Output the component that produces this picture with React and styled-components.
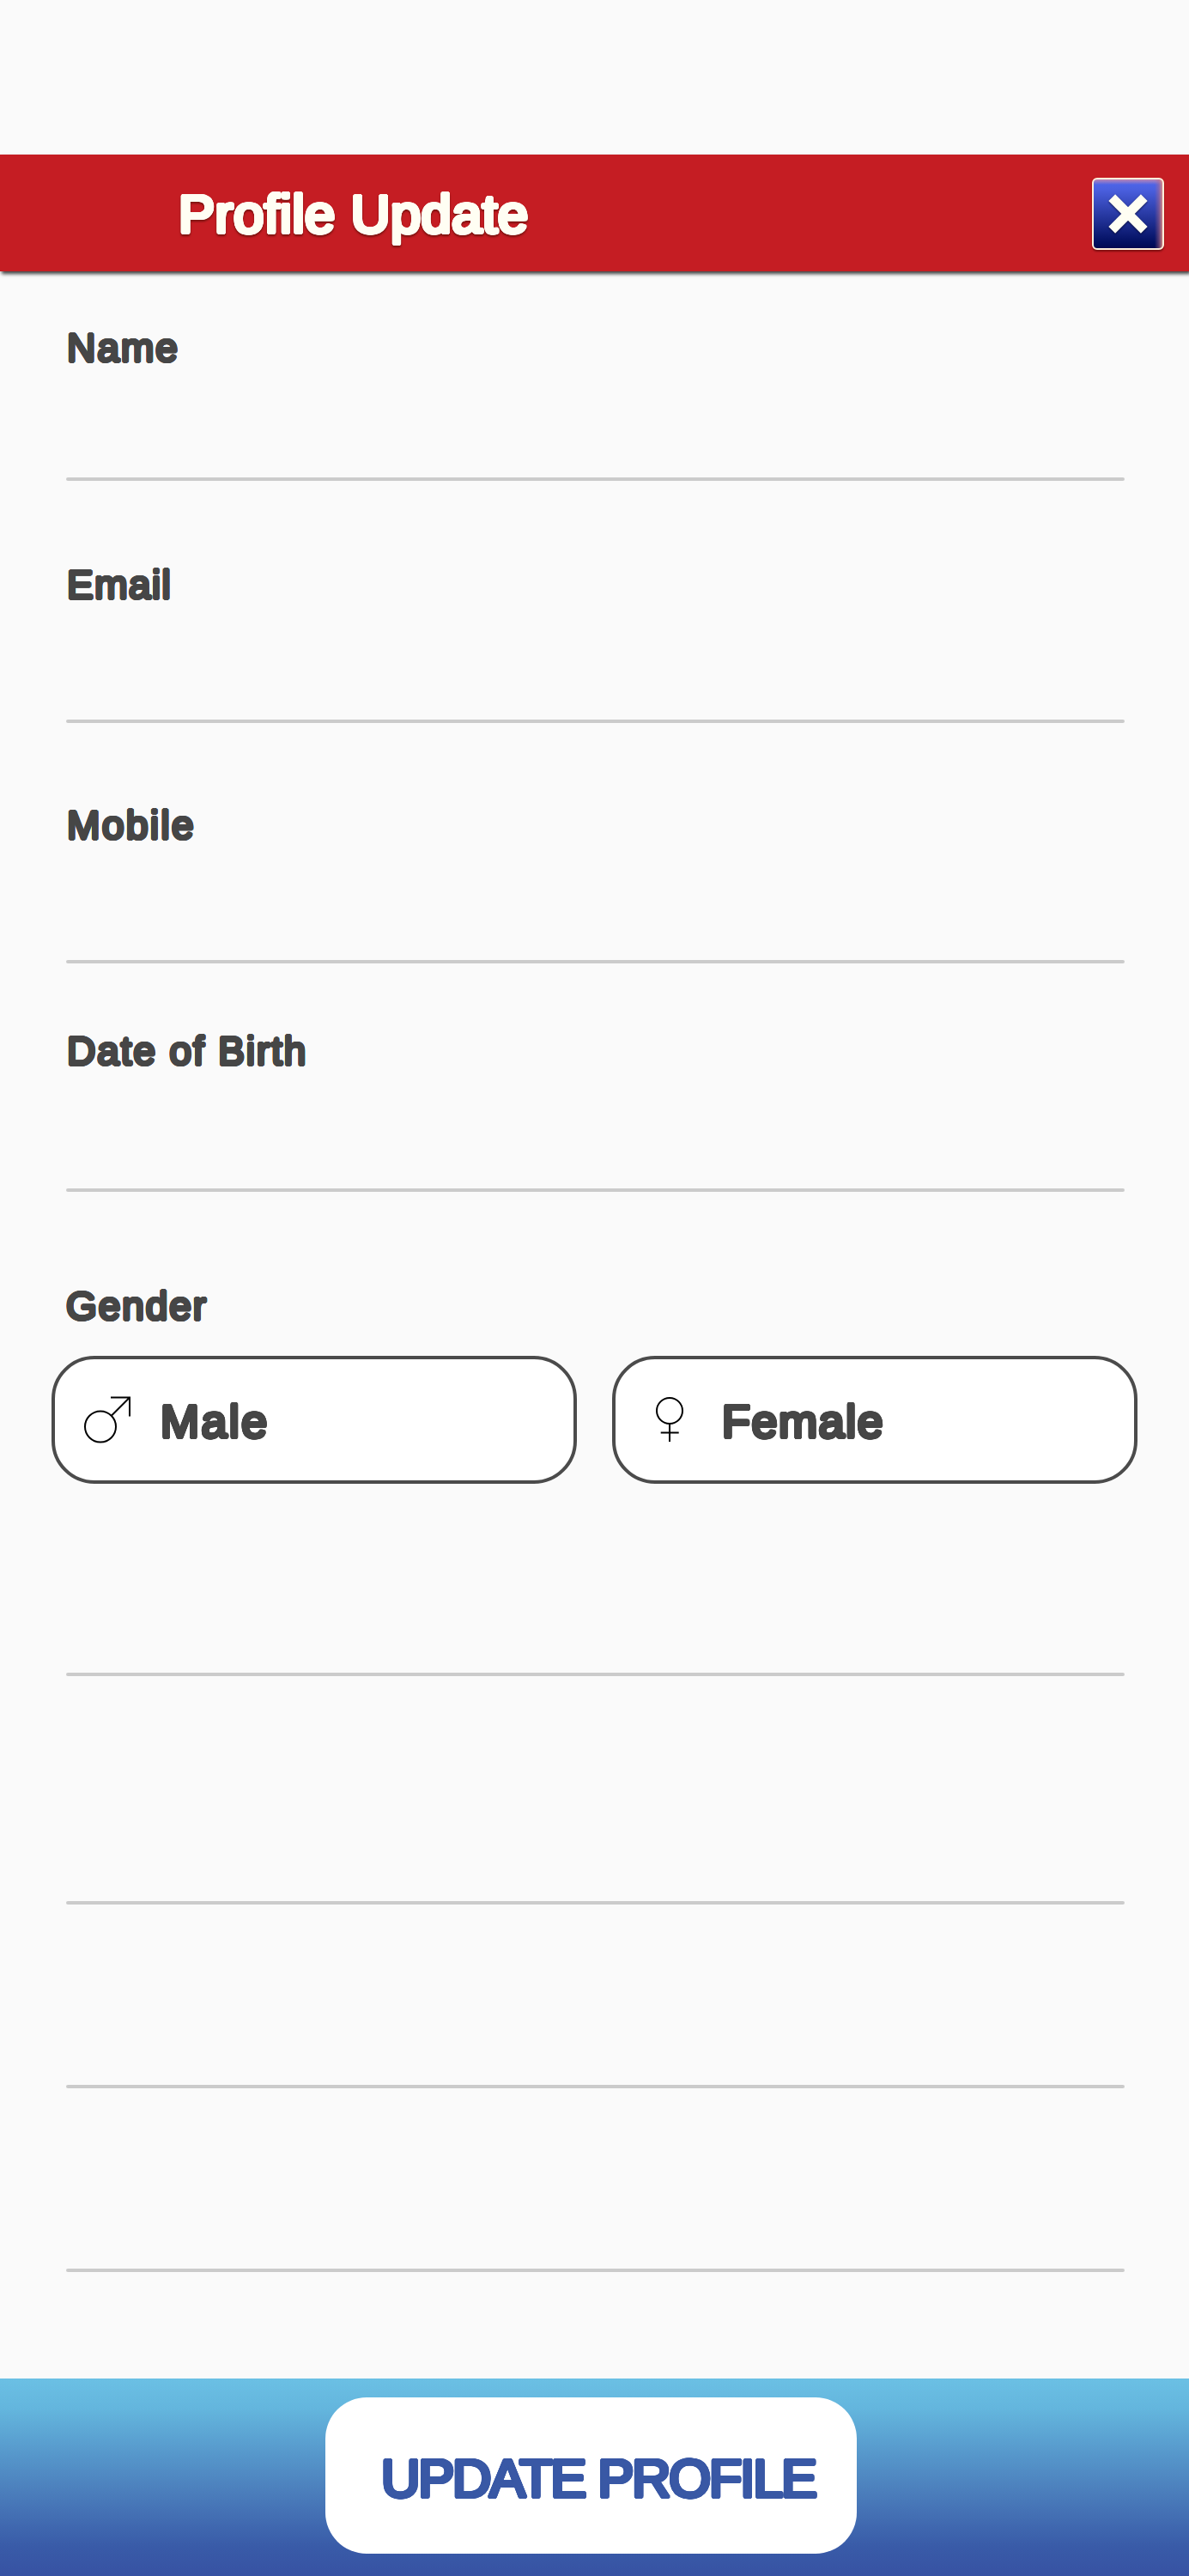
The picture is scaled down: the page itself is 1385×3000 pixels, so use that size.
import React from "react";
import styled, { createGlobalStyle, css } from "styled-components";

const GlobalStyle = createGlobalStyle`
  *, *::before, *::after { box-sizing: border-box; }
  body { margin: 0; background: #fafafa; }
`;

// Thickens regular glyphs evenly on every side, which rounds the stroke ends.
const roundedWeight = (radius) => {
  const points = [];
  for (let i = 0; i < 20; i += 1) {
    const a = (i / 20) * Math.PI * 2;
    points.push(`${(Math.cos(a) * radius).toFixed(2)}px ${(Math.sin(a) * radius).toFixed(2)}px 0 currentColor`);
  }
  for (let i = 0; i < 8; i += 1) {
    const a = (i / 8) * Math.PI * 2;
    points.push(`${(Math.cos(a) * radius * 0.5).toFixed(2)}px ${(Math.sin(a) * radius * 0.5).toFixed(2)}px 0 currentColor`);
  }
  return points.join(", ");
};

const rounded = css`
  font-family: "Liberation Sans", Arial, sans-serif;
  font-weight: 400;
  white-space: nowrap;
  letter-spacing: ${(p) => p.$track || 0}px;
`;

const Screen = styled.div`
  display: flex;
  flex-direction: column;
  width: 1385px;
  height: 3000px;
  padding-top: 180px;
  background: #fafafa;
  overflow: hidden;
`;

const Header = styled.header`
  display: flex;
  align-items: center;
  justify-content: space-between;
  flex: none;
  height: 136px;
  padding: 2px 29px 0 208px;
  background: #c51d23;
  box-shadow: 2px 3px 4px rgba(0, 0, 0, 0.75);
`;

const Title = styled.h1`
  ${rounded}
  margin: 0;
  font-size: 63px;
  line-height: 70px;
  color: #fffef3;
  text-shadow: ${roundedWeight(2.4)};
  filter: drop-shadow(0 2px 1px rgba(70, 10, 0, 0.6));
`;

const CloseButton = styled.button`
  display: flex;
  align-items: center;
  justify-content: center;
  width: 84px;
  height: 84px;
  padding: 0;
  border: 2px solid #fdf0dc;
  border-radius: 6px;
  background:
    linear-gradient(to left, rgba(226, 140, 130, 0.9), rgba(190, 110, 130, 0.45) 4px, rgba(150, 90, 150, 0) 9px),
    linear-gradient(to bottom, rgba(215, 140, 165, 0.8), rgba(150, 120, 200, 0) 6px),
    linear-gradient(to bottom, #5068ee 0%, #4b60e0 14%, #020f60 92%, #020850 100%);
  box-shadow: 0 2px 2px rgba(70, 0, 0, 0.55);
`;

const CloseIcon = styled.svg`
  display: block;
  filter: drop-shadow(0 1px 1px rgba(0, 0, 30, 0.7));
`;

const Form = styled.form`
  display: flex;
  flex-direction: column;
  flex: none;
`;

const Field = styled.div`
  display: flex;
  flex-direction: column;
  height: ${(p) => p.$height}px;
  padding: ${(p) => p.$top || 0}px 75px 0 77px;
`;

const Label = styled.label`
  ${rounded}
  flex: none;
  padding-left: 1px;
  font-size: 46.2px;
  line-height: 46px;
  color: #464646;
  text-shadow: ${roundedWeight(1.7)};
`;

const Input = styled.input`
  flex: 1;
  min-height: 0;
  width: 100%;
  padding: 0;
  border: 0;
  outline: 0;
  background: transparent;
  font: 400 46px "Liberation Sans", Arial, sans-serif;
  color: #464646;
`;

const Underline = styled.div`
  flex: none;
  height: 4px;
  border-radius: 2px;
  background: #cbcbcb;
`;

const GenderHeading = styled.div`
  display: flex;
  height: 191px;
  padding: 110px 0 0 76px;
`;

const GenderRow = styled.div`
  display: grid;
  grid-template-columns: 612px 612px;
  column-gap: 41px;
  padding: 0 60px;
`;

const Option = styled.button`
  display: flex;
  align-items: center;
  height: 149px;
  padding: 0 0 0 ${(p) => p.$inset}px;
  gap: ${(p) => p.$gap}px;
  border: 4px solid #4b4b4b;
  border-radius: 50px;
  background: #ffffff;
`;

const OptionText = styled.span`
  ${rounded}
  padding-top: 2px;
  font-size: 54px;
  line-height: 60px;
  color: #464646;
  text-shadow: ${roundedWeight(2)};
`;

const Footer = styled.footer`
  display: flex;
  justify-content: center;
  flex: none;
  height: 230px;
  margin-top: auto;
  padding: 22px 8px 0 0;
  background: linear-gradient(to bottom, #6bc0e4 0%, #63b5dd 16%, #4c80bd 56%, #395ba8 85%, #3752a3 100%);
`;

const UpdateButton = styled.button`
  display: flex;
  align-items: center;
  width: 619px;
  height: 182px;
  padding: 5px 0 0 65px;
  border: 0;
  border-radius: 48px;
  background: #ffffff;
`;

const UpdateText = styled.span`
  ${rounded}
  font-size: 63px;
  line-height: 70px;
  color: #3958a5;
  text-shadow: ${roundedWeight(2.3)};
`;

const MaleIcon = () => (
  <svg width="56" height="56" viewBox="0 0 56 56" fill="none" stroke="#000" strokeWidth="2">
    <circle cx="20" cy="35.5" r="18" />
    <path d="M32 1.5H54V23.5M54 1.5L33 22.5" />
  </svg>
);

const FemaleIcon = () => (
  <svg width="33" height="56" viewBox="0 0 33 56" fill="none" stroke="#000" strokeWidth="2">
    <circle cx="17" cy="17" r="15" />
    <path d="M17 32V53M6.7 42.5H27.7" />
  </svg>
);

const fields = [
  { id: "name", label: "Name", height: 244, top: 66, track: 1.9 },
  { id: "email", label: "Email", height: 282, top: 98, track: 1.3 },
  { id: "mobile", label: "Mobile", height: 280, top: 96, track: 2.3 },
  { id: "dob", label: "Date of Birth", height: 266, top: 79, track: 1.8 },
];

const blankFields = [224, 266, 214, 214];

export default function App() {
  return (
    <>
      <GlobalStyle />
      <Screen>
        <Header>
          <Title $track={0.6}>Profile Update</Title>
          <CloseButton type="button" aria-label="Close">
            <CloseIcon width="50" height="50" viewBox="0 0 50 50">
              <path d="M6.2 6.2L43.8 43.8M43.8 6.2L6.2 43.8" fill="none" stroke="#fffef3" strokeWidth="11" />
            </CloseIcon>
          </CloseButton>
        </Header>
        <Form>
          {fields.map((f) => (
            <Field key={f.id} $height={f.height} $top={f.top}>
              <Label htmlFor={f.id} $track={f.track}>{f.label}</Label>
              <Input id={f.id} />
              <Underline />
            </Field>
          ))}
          <GenderHeading>
            <Label as="span" $track={1.8}>Gender</Label>
          </GenderHeading>
          <GenderRow>
            <Option type="button" $inset={33} $gap={34}>
              <MaleIcon />
              <OptionText $track={2.4}>Male</OptionText>
            </Option>
            <Option type="button" $inset={46} $gap={45}>
              <FemaleIcon />
              <OptionText $track={1.5}>Female</OptionText>
            </Option>
          </GenderRow>
          {blankFields.map((height, i) => (
            <Field key={i} $height={height}>
              <Input />
              <Underline />
            </Field>
          ))}
        </Form>
        <Footer>
          <UpdateButton type="button">
            <UpdateText $track={-2.3}>UPDATE PROFILE</UpdateText>
          </UpdateButton>
        </Footer>
      </Screen>
    </>
  );
}
